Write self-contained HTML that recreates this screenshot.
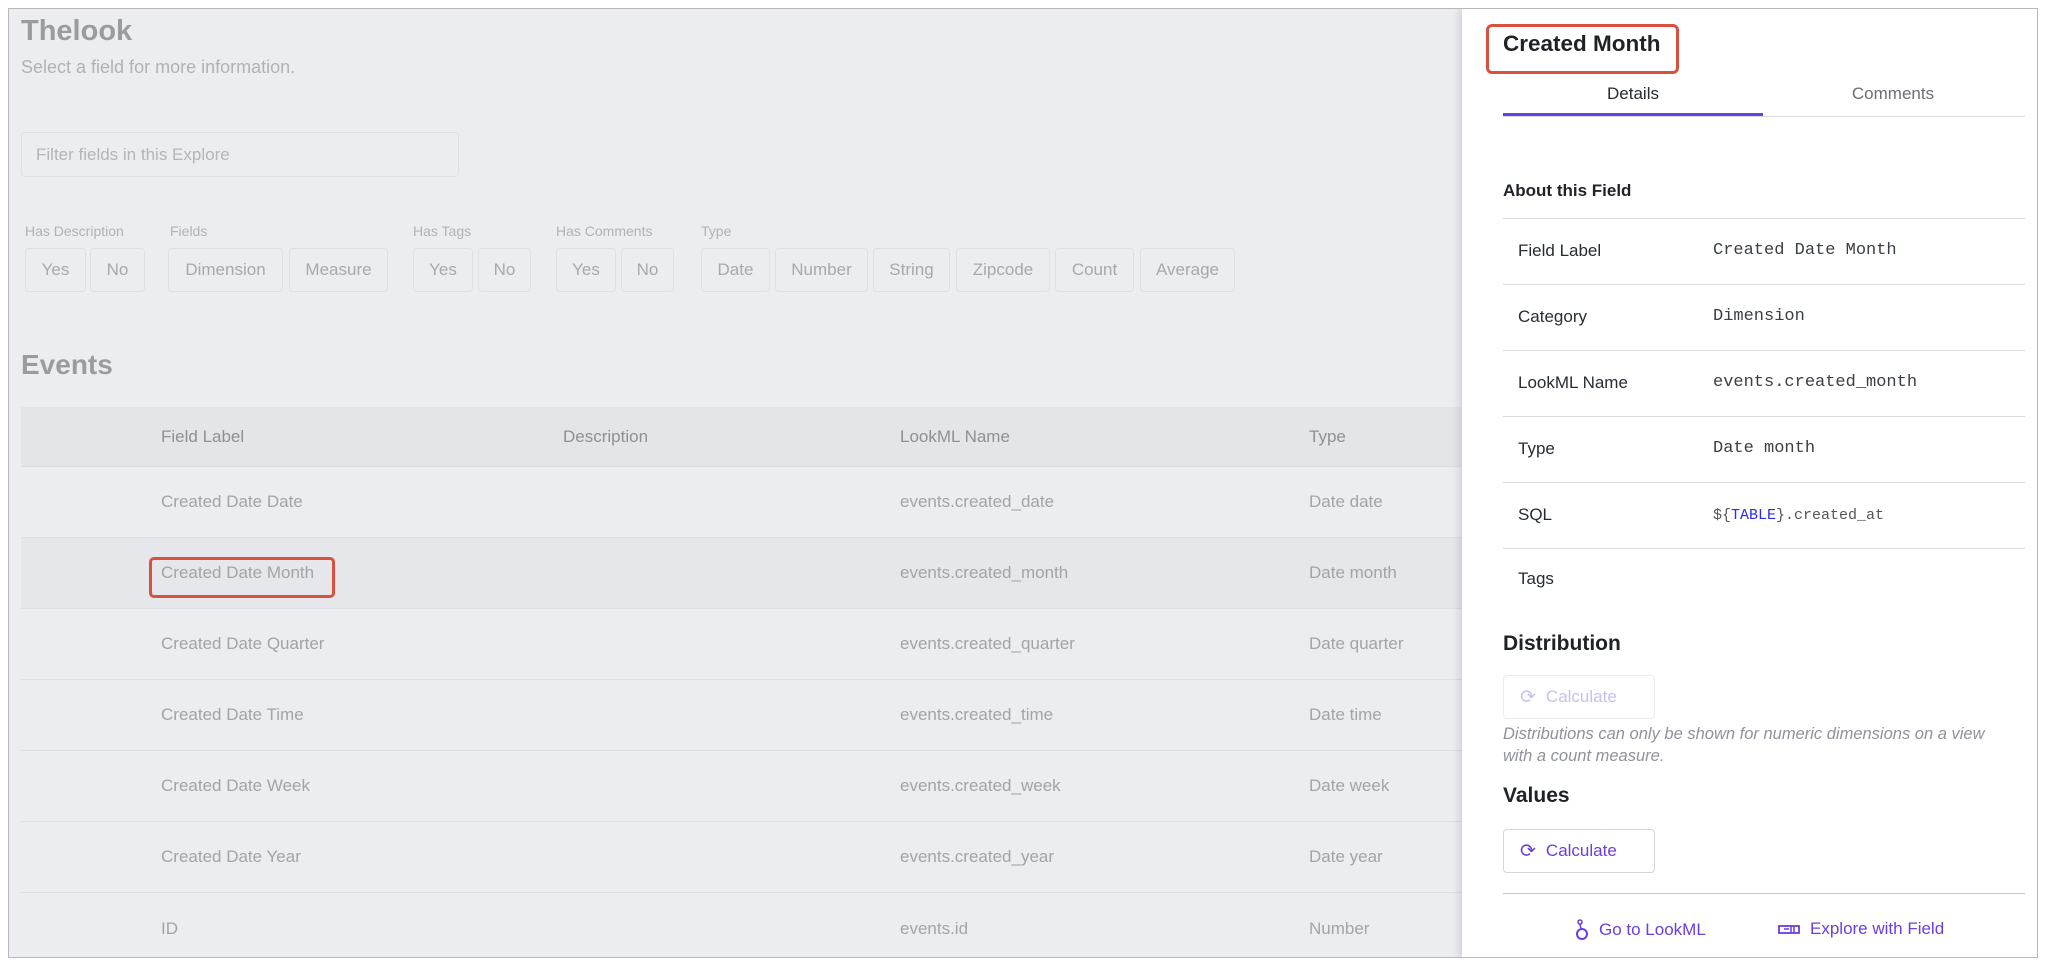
<!DOCTYPE html>
<html><head><meta charset="utf-8"><style>
*{box-sizing:border-box;margin:0;padding:0}
body{width:2047px;height:962px;background:#fff;font-family:"Liberation Sans",sans-serif;position:relative;overflow:hidden}
.frame{position:absolute;left:8px;top:8px;width:2030px;height:950px;border:1px solid #b8b8b8;background:#ecedf0;overflow:hidden}
.a{position:absolute;white-space:nowrap}
.g{color:#a3a5a9}
.btn{position:absolute;top:239px;height:44px;border:1px solid #dfe0e3;border-radius:4px;color:#a7a9ad;font-size:17px;display:flex;align-items:center;justify-content:center}
.lbl{position:absolute;top:214px;font-size:14px;color:#b0b2b6}
.hdr{position:absolute;left:12px;top:398px;width:1460px;height:60px;background:#e4e5e8;border-bottom:1px solid #dcdde0}
.row{position:absolute;left:12px;width:1460px;height:71px;border-bottom:1px solid #dedfe2}
.c{position:absolute;font-size:17px;color:#a2a4a8;top:50%;transform:translateY(-50%)}
.panel{position:absolute;left:1453px;top:0;width:577px;height:950px;background:#fff;box-shadow:-3px 0 8px rgba(0,0,0,.12)}
.trow{position:absolute;left:41px;width:522px;border-top:1px solid #dcdcdf}
.tl{position:absolute;left:56px;font-size:17px;color:#262d33}
.tv{position:absolute;left:251px;font-family:"Liberation Mono",monospace;font-size:17px;color:#3a3f45}
.pb{position:absolute;left:41px;width:152px;height:44px;border:1px solid #d6d6da;border-radius:4px;display:flex;align-items:center;padding-left:16px;font-size:17px;color:#6a3ee0}
</style></head><body>
<div class="frame">
<div class="a" style="left:12px;top:6px;font-size:29px;font-weight:bold;color:#9a9ca0">Thelook</div>
<div class="a g" style="left:12px;top:48px;font-size:18px;color:#b0b2b6">Select a field for more information.</div>
<div class="a" style="left:12px;top:123px;width:438px;height:45px;border:1px solid #dfe0e3;border-radius:4px;font-size:17px;color:#b3b5b9;padding:12px 14px">Filter fields in this Explore</div>
<div class="lbl" style="left:16px">Has Description</div>
<div class="lbl" style="left:161px">Fields</div>
<div class="lbl" style="left:404px">Has Tags</div>
<div class="lbl" style="left:547px">Has Comments</div>
<div class="lbl" style="left:692px">Type</div>
<div class="btn" style="left:16px;width:61px">Yes</div>
<div class="btn" style="left:81px;width:55px">No</div>
<div class="btn" style="left:159px;width:115px">Dimension</div>
<div class="btn" style="left:280px;width:99px">Measure</div>
<div class="btn" style="left:404px;width:60px">Yes</div>
<div class="btn" style="left:469px;width:53px">No</div>
<div class="btn" style="left:547px;width:60px">Yes</div>
<div class="btn" style="left:612px;width:53px">No</div>
<div class="btn" style="left:692px;width:69px">Date</div>
<div class="btn" style="left:766px;width:93px">Number</div>
<div class="btn" style="left:864px;width:77px">String</div>
<div class="btn" style="left:947px;width:94px">Zipcode</div>
<div class="btn" style="left:1046px;width:79px">Count</div>
<div class="btn" style="left:1131px;width:95px">Average</div>
<div class="a" style="left:12px;top:340px;font-size:28px;font-weight:bold;color:#9a9ca0">Events</div>
<div class="hdr"><div class="c" style="left:140px;color:#8e9094">Field Label</div><div class="c" style="left:542px;color:#8e9094">Description</div><div class="c" style="left:879px;color:#8e9094">LookML Name</div><div class="c" style="left:1288px;color:#8e9094">Type</div></div>
<div class="row" style="top:458px"><div class="c" style="left:140px">Created Date Date</div><div class="c" style="left:879px">events.created_date</div><div class="c" style="left:1288px">Date date</div></div>
<div class="row" style="top:529px;background:#e6e7ea"><div class="c" style="left:140px">Created Date Month</div><div class="c" style="left:879px">events.created_month</div><div class="c" style="left:1288px">Date month</div></div>
<div class="row" style="top:600px"><div class="c" style="left:140px">Created Date Quarter</div><div class="c" style="left:879px">events.created_quarter</div><div class="c" style="left:1288px">Date quarter</div></div>
<div class="row" style="top:671px"><div class="c" style="left:140px">Created Date Time</div><div class="c" style="left:879px">events.created_time</div><div class="c" style="left:1288px">Date time</div></div>
<div class="row" style="top:742px"><div class="c" style="left:140px">Created Date Week</div><div class="c" style="left:879px">events.created_week</div><div class="c" style="left:1288px">Date week</div></div>
<div class="row" style="top:813px"><div class="c" style="left:140px">Created Date Year</div><div class="c" style="left:879px">events.created_year</div><div class="c" style="left:1288px">Date year</div></div>
<div class="row" style="top:884px;border:none"><div class="c" style="left:140px">ID</div><div class="c" style="left:879px">events.id</div><div class="c" style="left:1288px">Number</div></div>
<div class="a" style="left:140px;top:548px;width:186px;height:41px;border:3px solid #d9503f;border-radius:5px"></div>

<div class="panel">
<div class="a" style="left:24px;top:15px;width:193px;height:50px;border:3px solid #d9503f;border-radius:6px"></div>
<div class="a" style="left:41px;top:22px;font-size:22.5px;font-weight:bold;color:#1f2328">Created Month</div>
<div class="a" style="left:41px;top:75px;width:260px;text-align:center;font-size:17px;color:#262d33">Details</div>
<div class="a" style="left:301px;top:75px;width:260px;text-align:center;font-size:17px;color:#6b6f76">Comments</div>
<div class="a" style="left:41px;top:107px;width:522px;height:1px;background:#dcdcdf"></div>
<div class="a" style="left:41px;top:104px;width:260px;height:3px;background:#6a3ee0"></div>
<div class="a" style="left:41px;top:172px;font-size:17px;font-weight:bold;color:#1f2328">About this Field</div>
<div class="trow" style="top:209px;height:66px"><div class="tl" style="left:15px;top:22px">Field Label</div><div class="tv" style="left:210px;top:22px">Created Date Month</div></div>
<div class="trow" style="top:275px;height:66px"><div class="tl" style="left:15px;top:22px">Category</div><div class="tv" style="left:210px;top:22px">Dimension</div></div>
<div class="trow" style="top:341px;height:66px"><div class="tl" style="left:15px;top:22px">LookML Name</div><div class="tv" style="left:210px;top:22px">events.created_month</div></div>
<div class="trow" style="top:407px;height:66px"><div class="tl" style="left:15px;top:22px">Type</div><div class="tv" style="left:210px;top:22px">Date month</div></div>
<div class="trow" style="top:473px;height:66px"><div class="tl" style="left:15px;top:22px">SQL</div><div class="tv" style="left:210px;top:24px;font-size:15px;color:#555">${<span style="color:#2a2ae8">TABLE</span>}.created_at</div></div>
<div class="trow" style="top:539px;height:60px"><div class="tl" style="left:15px;top:20px">Tags</div></div>
<div class="a" style="left:41px;top:623px;font-size:21px;font-weight:bold;color:#1f2328">Distribution</div>
<div class="pb" style="top:666px;border-color:#ececef;color:#c9c0ef"><span style="margin-right:10px;font-size:19px">⟳</span>Calculate</div>
<div class="a" style="left:41px;top:714px;font-size:16.5px;font-style:italic;color:#8f919c;line-height:22px">Distributions can only be shown for numeric dimensions on a view<br>with a count measure.</div>
<div class="a" style="left:41px;top:775px;font-size:21px;font-weight:bold;color:#1f2328">Values</div>
<div class="pb" style="top:820px"><span style="margin-right:10px;font-size:19px">⟳</span>Calculate</div>
<div class="a" style="left:41px;top:884px;width:522px;height:1px;background:#c8c8cc"></div>
<div class="a" style="left:113px;top:910px;font-size:17px;color:#6a3ee0;display:flex;align-items:center"><svg width="14" height="22" viewBox="0 0 14 22" style="margin-right:10px"><circle cx="5" cy="3" r="2" fill="none" stroke="#6a3ee0" stroke-width="1.5"/><circle cx="7" cy="15" r="5" fill="none" stroke="#6a3ee0" stroke-width="2"/><path d="M5 5 L6 10" stroke="#6a3ee0" stroke-width="1.5"/></svg>Go to LookML</div>
<div class="a" style="left:316px;top:910px;font-size:17px;color:#6a3ee0;display:flex;align-items:center"><svg width="22" height="12" viewBox="0 0 22 12" style="margin-right:10px"><rect x="1" y="3" width="20" height="7" fill="none" stroke="#6a3ee0" stroke-width="1.8"/><path d="M13 3v7M16 3v7M6 6h5" stroke="#6a3ee0" stroke-width="1.5"/></svg>Explore with Field</div>
</div>
</div>
</body></html>
